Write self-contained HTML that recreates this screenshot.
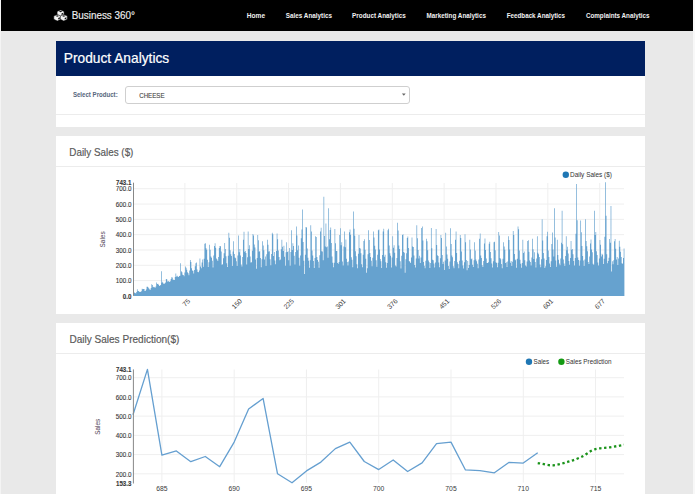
<!DOCTYPE html>
<html><head><meta charset="utf-8"><title>Business 360 - Product Analytics</title>
<style>
html,body{margin:0;padding:0;}
body{width:695px;height:494px;overflow:hidden;background:#e9e9e9;position:relative;font-family:"Liberation Sans", sans-serif;}
.abs{position:absolute;left:0;top:0;}
#edgeL{position:absolute;left:0;top:0;width:1px;height:494px;background:#f4f4f4;}
#edgeR{position:absolute;left:693px;top:0;width:2px;height:494px;background:#f8f8f8;}
#hdr{position:absolute;left:1px;top:0;width:692px;height:31px;background:#000;}
.panel{position:absolute;left:55.5px;width:589.5px;background:#fff;}
#p1{top:41px;height:86px;}
#p2{top:136px;height:178px;}
#p3{top:323px;height:200px;}
#blue{position:absolute;left:0;top:0;width:100%;height:34.5px;background:#001f5f;}
.div{position:absolute;left:0;width:100%;height:1px;background:#ececec;}
svg text{font-family:"Liberation Sans", sans-serif;}
</style></head>
<body>
<div id="edgeL"></div><div id="edgeR"></div>
<div id="hdr"></div>
<div class="panel" id="p1"><div id="blue"></div><div class="div" style="top:73px"></div>
<div style="position:absolute;left:69.5px;top:45.3px;width:284.8px;height:17.8px;border:1px solid #cfcfcf;border-radius:3px;box-sizing:border-box;"></div>
</div>
<div class="panel" id="p2"><div class="div" style="top:29.5px"></div></div>
<div class="panel" id="p3"><div class="div" style="top:29.5px"></div></div>
<svg class="abs" width="695" height="494" viewBox="0 0 695 494">
<g><path d="M60.6,9.9 L64.1,11.5 L64.1,14.8 L60.6,16.5 L57.1,14.8 L57.1,11.5Z" fill="#f4f4f4" stroke="#000" stroke-width="0.5"/><path d="M60.6,10.8 L62.300000000000004,11.55 L60.6,12.3 L58.9,11.55Z M61.5,13.600000000000001 L63.2,12.8 L63.2,14.3 L61.5,15.100000000000001Z" fill="#111"/><path d="M57.3,14.4 L60.8,16.0 L60.8,19.3 L57.3,21.0 L53.8,19.3 L53.8,16.0Z" fill="#f4f4f4" stroke="#000" stroke-width="0.5"/><path d="M57.3,15.3 L59.0,16.05 L57.3,16.8 L55.599999999999994,16.05Z M58.199999999999996,18.1 L59.9,17.3 L59.9,18.8 L58.199999999999996,19.6Z" fill="#111"/><path d="M63.8,14.4 L67.3,16.0 L67.3,19.3 L63.8,21.0 L60.3,19.3 L60.3,16.0Z" fill="#f4f4f4" stroke="#000" stroke-width="0.5"/><path d="M63.8,15.3 L65.5,16.05 L63.8,16.8 L62.099999999999994,16.05Z M64.7,18.1 L66.39999999999999,17.3 L66.39999999999999,18.8 L64.7,19.6Z" fill="#111"/></g>
<text x="71.7" y="18.8" font-size="10.3" fill="#eeeeee" stroke="#eeeeee" stroke-width="0.15" textLength="63.3" lengthAdjust="spacingAndGlyphs">Business 360°</text>
<g font-size="7.5" font-weight="700" fill="#f2f2f2">
<text x="246.8" y="17.7" textLength="18.3" lengthAdjust="spacingAndGlyphs">Home</text>
<text x="285.8" y="17.7" textLength="46.2" lengthAdjust="spacingAndGlyphs">Sales Analytics</text>
<text x="352.1" y="17.7" textLength="53.7" lengthAdjust="spacingAndGlyphs">Product Analytics</text>
<text x="426.5" y="17.7" textLength="59.4" lengthAdjust="spacingAndGlyphs">Marketing Analytics</text>
<text x="506.7" y="17.7" textLength="58.3" lengthAdjust="spacingAndGlyphs">Feedback Analytics</text>
<text x="585.9" y="17.7" textLength="63.6" lengthAdjust="spacingAndGlyphs">Complaints Analytics</text>
</g>
<text x="63.8" y="62.9" font-size="14.2" fill="#ffffff" stroke="#ffffff" stroke-width="0.2" textLength="105.4" lengthAdjust="spacingAndGlyphs">Product Analytics</text>
<text x="72.9" y="97.4" font-size="7.8" font-weight="700" fill="#56667c" textLength="44.8" lengthAdjust="spacingAndGlyphs">Select Product:</text>
<text x="139.2" y="97.8" font-size="8.1" fill="#4a4a4a" stroke="#4a4a4a" stroke-width="0.15" textLength="25.3" lengthAdjust="spacingAndGlyphs">CHEESE</text>
<path d="M401.9 93.4 h3.8 l-1.9 2.3z" fill="#666"/>
<text x="69.3" y="155.5" font-size="11.8" fill="#5a5a5a" stroke="#5a5a5a" stroke-width="0.2" textLength="64.1" lengthAdjust="spacingAndGlyphs">Daily Sales ($)</text>
<text x="69.4" y="342.6" font-size="11.8" fill="#5a5a5a" stroke="#5a5a5a" stroke-width="0.2" textLength="110" lengthAdjust="spacingAndGlyphs">Daily Sales Prediction($)</text>

<!-- chart 1 -->
<g stroke="#efefef" stroke-width="1"><line x1="133.5" x2="624" y1="280.59" y2="280.59"/><line x1="133.5" x2="624" y1="265.28" y2="265.28"/><line x1="133.5" x2="624" y1="249.97" y2="249.97"/><line x1="133.5" x2="624" y1="234.66" y2="234.66"/><line x1="133.5" x2="624" y1="219.35" y2="219.35"/><line x1="133.5" x2="624" y1="204.04" y2="204.04"/><line x1="133.5" x2="624" y1="188.73" y2="188.73"/><line x1="184.90" x2="184.90" y1="183" y2="295.5"/><line x1="236.75" x2="236.75" y1="183" y2="295.5"/><line x1="288.60" x2="288.60" y1="183" y2="295.5"/><line x1="340.45" x2="340.45" y1="183" y2="295.5"/><line x1="392.30" x2="392.30" y1="183" y2="295.5"/><line x1="444.15" x2="444.15" y1="183" y2="295.5"/><line x1="496.00" x2="496.00" y1="183" y2="295.5"/><line x1="547.85" x2="547.85" y1="183" y2="295.5"/><line x1="599.70" x2="599.70" y1="183" y2="295.5"/></g>
<g fill="#66a2cf"><path d="M133.50,295.90L133.50,292.05L134.19,292.05L134.19,292.79L134.88,292.79L134.88,292.90L135.57,292.90L135.57,293.59L136.25,293.59L136.25,292.06L136.94,292.06L136.94,289.13L137.63,289.13L137.63,291.13L138.32,291.13L138.32,291.11L139.01,291.11L139.01,291.68L139.70,291.68L139.70,292.05L140.39,292.05L140.38,291.63L141.07,291.63L141.07,291.22L141.76,291.22L141.76,288.69L142.45,288.69L142.45,289.26L143.14,289.26L143.14,289.10L143.83,289.10L143.83,289.08L144.52,289.08L144.52,290.92L145.20,290.92L145.20,290.84L145.89,290.84L145.89,289.38L146.58,289.38L146.58,286.84L147.27,286.84L147.27,286.72L147.96,286.72L147.96,287.52L148.65,287.52L148.65,288.45L149.34,288.45L149.34,289.56L150.02,289.56L150.02,289.68L150.71,289.68L150.71,288.04L151.40,288.04L151.40,284.35L152.09,284.35L152.09,284.94L152.78,284.94L152.78,287.15L153.47,287.15L153.47,286.86L154.16,286.86L154.16,287.30L154.84,287.30L154.84,287.82L155.53,287.82L155.53,286.38L156.22,286.38L156.22,282.47L156.91,282.47L156.91,284.02L157.60,284.02L157.60,283.86L158.29,283.86L158.29,284.77L158.97,284.77L158.97,285.88L159.66,285.88L159.66,285.61L160.35,285.61L160.35,284.98L161.04,284.98L161.04,271.25L161.73,271.25L161.73,282.86L162.42,282.86L162.42,281.69L163.11,281.69L163.11,283.50L163.79,283.50L163.79,283.98L164.48,283.98L164.48,283.35L165.17,283.35L165.17,282.41L165.86,282.41L165.86,278.88L166.55,278.88L166.55,279.30L167.24,279.30L167.24,281.40L167.93,281.40L167.93,281.22L168.61,281.22L168.61,281.30L169.30,281.30L169.30,282.00L169.99,282.00L169.99,281.34L170.68,281.34L170.68,278.96L171.37,278.96L171.37,277.13L172.06,277.13L172.06,277.53L172.74,277.53L172.74,279.71L173.43,279.71L173.43,279.74L174.12,279.74L174.12,280.10L174.81,280.10L174.81,276.90L175.50,276.90L175.50,273.38L176.19,273.38L176.19,276.39L176.88,276.39L176.88,275.75L177.56,275.75L177.56,276.68L178.25,276.68L178.25,276.94L178.94,276.94L178.94,275.94L179.63,275.94L179.63,275.67L180.32,275.67L180.32,263.14L181.01,263.14L181.01,271.15L181.70,271.15L181.69,272.16L182.38,272.16L182.38,274.83L183.07,274.83L183.07,274.98L183.76,274.98L183.76,276.24L184.45,276.24L184.45,272.62L185.14,272.62L185.14,266.42L185.83,266.42L185.83,267.72L186.51,267.72L186.51,269.85L187.20,269.85L187.20,272.25L187.89,272.25L187.89,273.21L188.58,273.21L188.58,275.31L189.27,275.31L189.27,270.41L189.96,270.41L189.96,259.92L190.65,259.92L190.65,262.05L191.33,262.05L191.33,268.28L192.02,268.28L192.02,270.55L192.71,270.55L192.71,270.86L193.40,270.86L193.40,273.49L194.09,273.49L194.09,269.92L194.78,269.92L194.78,266.25L195.47,266.25L195.47,263.13L196.15,263.13L196.15,262.53L196.84,262.53L196.84,269.58L197.53,269.58L197.53,271.91L198.22,271.91L198.22,272.28L198.91,272.28L198.91,270.42L199.60,270.42L199.60,258.39L200.28,258.39L200.28,266.38L200.97,266.38L200.97,268.37L201.66,268.37L201.66,262.56L202.35,262.56L202.35,259.61L203.04,259.61L203.04,266.64L203.73,266.64L203.73,258.72L204.42,258.72L204.42,243.79L205.10,243.79L205.10,243.35L205.79,243.35L205.79,248.31L206.48,248.31L206.48,249.68L207.17,249.68L207.17,259.73L207.86,259.73L207.86,266.90L208.55,266.90L208.55,262.31L209.23,262.31L209.24,244.76L209.92,244.76L209.92,249.84L210.61,249.84L210.61,256.49L211.30,256.49L211.30,257.76L211.99,257.76L211.99,260.68L212.68,260.68L212.68,267.46L213.37,267.46L213.37,255.41L214.05,255.41L214.05,245.99L214.74,245.99L214.74,243.24L215.43,243.24L215.43,247.85L216.12,247.85L216.12,258.46L216.81,258.46L216.81,259.45L217.50,259.45L217.50,261.07L218.19,261.07L218.19,257.01L218.87,257.01L218.87,247.96L219.56,247.96L219.56,245.90L220.25,245.90L220.25,246.16L220.94,246.16L220.94,251.50L221.63,251.50L221.63,264.77L222.32,264.77L222.32,264.20L223.01,264.20L223.00,258.30L223.69,258.30L223.69,253.28L224.38,253.28L224.38,243.05L225.07,243.05L225.07,248.88L225.76,248.88L225.76,256.28L226.45,256.28L226.45,263.37L227.14,263.37L227.14,267.07L227.82,267.07L227.82,255.85L228.51,255.85L228.51,232.67L229.20,232.67L229.20,237.68L229.89,237.68L229.89,250.17L230.58,250.17L230.58,254.30L231.27,254.30L231.27,256.10L231.96,256.10L231.96,265.98L232.64,265.98L232.64,251.57L233.33,251.57L233.33,241.15L234.02,241.15L234.02,254.06L234.71,254.06L234.71,257.41L235.40,257.41L235.40,258.20L236.09,258.20L236.09,261.19L236.78,261.19L236.78,265.96L237.46,265.96L237.46,255.57L238.15,255.57L238.15,235.55L238.84,235.55L238.84,252.22L239.53,252.22L239.53,249.03L240.22,249.03L240.22,255.59L240.91,255.59L240.91,264.42L241.59,264.42L241.59,266.40L242.28,266.40L242.28,256.91L242.97,256.91L242.97,239.87L243.66,239.87L243.66,231.67L244.35,231.67L244.35,251.69L245.04,251.69L245.04,251.10L245.73,251.10L245.73,252.98L246.41,252.98L246.41,264.50L247.10,264.50L247.10,257.24L247.79,257.24L247.79,231.44L248.48,231.44L248.48,249.04L249.17,249.04L249.17,245.31L249.86,245.31L249.86,256.57L250.54,256.57L250.55,262.42L251.23,262.42L251.23,262.22L251.92,262.22L251.92,250.79L252.61,250.79L252.61,233.89L253.30,233.89L253.30,235.54L253.99,235.54L253.99,244.55L254.68,244.55L254.68,247.43L255.36,247.43L255.36,259.44L256.05,259.44L256.05,268.73L256.74,268.73L256.74,257.88L257.43,257.88L257.43,234.99L258.12,234.99L258.12,240.23L258.81,240.23L258.81,251.86L259.50,251.86L259.50,250.99L260.18,250.99L260.18,257.88L260.87,257.88L260.87,267.37L261.56,267.37L261.56,259.30L262.25,259.30L262.25,241.24L262.94,241.24L262.94,245.53L263.63,245.53L263.63,250.16L264.31,250.16L264.31,259.42L265.00,259.42L265.00,256.47L265.69,256.47L265.69,266.08L266.38,266.08L266.38,254.27L267.07,254.27L267.07,239.87L267.76,239.87L267.76,244.80L268.45,244.80L268.45,251.58L269.13,251.58L269.13,251.23L269.82,251.23L269.82,259.33L270.51,259.33L270.51,265.16L271.20,265.16L271.20,253.96L271.89,253.96L271.89,232.67L272.58,232.67L272.58,234.19L273.27,234.19L273.27,256.04L273.95,256.04L273.95,251.90L274.64,251.90L274.64,260.59L275.33,260.59L275.33,264.17L276.02,264.17L276.02,251.07L276.71,251.07L276.71,233.44L277.40,233.44L277.40,239.19L278.08,239.19L278.09,250.41L278.77,250.41L278.77,256.99L279.46,256.99L279.46,260.26L280.15,260.26L280.15,259.44L280.84,259.44L280.84,249.27L281.53,249.27L281.53,239.87L282.22,239.87L282.22,246.65L282.90,246.65L282.90,251.02L283.59,251.02L283.59,245.81L284.28,245.81L284.28,256.68L284.97,256.68L284.97,265.86L285.66,265.86L285.66,252.27L286.35,252.27L286.35,242.31L287.04,242.31L287.04,251.91L287.72,251.91L287.72,251.33L288.41,251.33L288.41,260.21L289.10,260.21L289.10,248.06L289.79,248.06L289.79,265.71L290.48,265.71L290.48,252.05L291.17,252.05L291.17,230.22L291.86,230.22L291.86,250.12L292.54,250.12L292.54,243.29L293.23,243.29L293.23,246.12L293.92,246.12L293.92,255.76L294.61,255.76L294.61,264.52L295.30,264.52L295.30,252.04L295.99,252.04L295.99,226.55L296.67,226.55L296.67,235.62L297.36,235.62L297.36,250.34L298.05,250.34L298.05,245.60L298.74,245.60L298.74,257.85L299.43,257.85L299.43,265.68L300.12,265.68L300.12,255.42L300.81,255.42L300.81,238.17L301.49,238.17L301.49,229.61L302.18,229.61L302.18,209.55L302.87,209.55L302.87,241.99L303.56,241.99L303.56,260.85L304.25,260.85L304.25,274.01L304.94,274.01L304.94,254.81L305.62,254.81L305.62,227.07L306.31,227.07L306.31,227.60L307.00,227.60L307.00,248.49L307.69,248.49L307.69,257.73L308.38,257.73L308.38,260.84L309.07,260.84L309.07,267.69L309.76,267.69L309.76,260.34L310.44,260.34L310.44,225.32L311.13,225.32L311.13,231.50L311.82,231.50L311.82,250.42L312.51,250.42L312.51,255.42L313.20,255.42L313.20,261.02L313.89,261.02L313.89,267.99L314.58,267.99L314.58,258.06L315.26,258.06L315.26,236.19L315.95,236.19L315.95,237.00L316.64,237.00L316.64,257.03L317.33,257.03L317.33,259.89L318.02,259.89L318.02,261.76L318.71,261.76L318.71,267.83L319.39,267.83L319.39,255.15L320.08,255.15L320.08,231.44L320.77,231.44L320.77,227.67L321.46,227.67L321.46,251.31L322.15,251.31L322.15,251.39L322.84,251.39L322.84,260.21L323.53,260.21L323.53,196.84L324.21,196.84L324.21,235.88L324.90,235.88L324.90,246.56L325.59,246.56L325.59,223.54L326.28,223.54L326.28,247.21L326.97,247.21L326.97,246.38L327.66,246.38L327.66,257.72L328.35,257.72L328.35,208.33L329.03,208.33L329.03,239.27L329.72,239.27L329.72,230.12L330.41,230.12L330.41,227.48L331.10,227.48L331.10,243.09L331.79,243.09L331.79,256.45L332.48,256.45L332.48,262.69L333.16,262.69L333.16,267.24L333.85,267.24L333.85,262.86L334.54,262.86L334.54,229.00L335.23,229.00L335.23,243.21L335.92,243.21L335.92,251.04L336.61,251.04L336.61,250.89L337.30,250.89L337.30,262.94L337.98,262.94L337.98,263.80L338.67,263.80L338.67,262.08L339.36,262.08L339.36,235.12L340.05,235.12L340.05,228.28L340.74,228.28L340.74,245.34L341.43,245.34L341.43,242.33L342.12,242.33L342.12,261.53L342.80,261.53L342.80,265.49L343.49,265.49L343.49,246.45L344.18,246.45L344.18,231.44L344.87,231.44L344.87,247.35L345.56,247.35L345.56,239.57L346.25,239.57L346.25,258.68L346.93,258.68L346.94,262.08L347.62,262.08L347.62,265.60L348.31,265.60L348.31,261.58L349.00,261.58L349.00,232.28L349.69,232.28L349.69,229.61L350.38,229.61L350.38,234.80L351.07,234.80L351.07,257.24L351.75,257.24L351.75,259.70L352.44,259.70L352.44,267.31L353.13,267.31L353.13,211.39L353.82,211.39L353.82,228.70L354.51,228.70L354.51,235.86L355.20,235.86L355.20,251.33L355.89,251.33L355.89,256.26L356.57,256.26L356.57,264.37L357.26,264.37L357.26,268.34L357.95,268.34L357.95,253.65L358.64,253.65L358.64,235.12L359.33,235.12L359.33,247.91L360.02,247.91L360.02,248.41L360.70,248.41L360.71,253.19L361.39,253.19L361.39,264.30L362.08,264.30L362.08,267.17L362.77,267.17L362.77,254.74L363.46,254.74L363.46,241.09L364.15,241.09L364.15,239.26L364.84,239.26L364.84,249.82L365.52,249.82L365.52,258.76L366.21,258.76L366.21,272.78L366.90,272.78L366.90,268.16L367.59,268.16L367.59,254.28L368.28,254.28L368.28,230.22L368.97,230.22L368.97,240.04L369.66,240.04L369.66,253.01L370.34,253.01L370.34,257.11L371.03,257.11L371.03,260.85L371.72,260.85L371.72,266.33L372.41,266.33L372.41,257.64L373.10,257.64L373.10,231.44L373.79,231.44L373.79,237.51L374.47,237.51L374.48,245.72L375.16,245.72L375.16,249.54L375.85,249.54L375.85,260.21L376.54,260.21L376.54,266.72L377.23,266.72L377.23,254.83L377.92,254.83L377.92,230.22L378.61,230.22L378.61,229.61L379.29,229.61L379.29,249.56L379.98,249.56L379.98,258.97L380.67,258.97L380.67,261.15L381.36,261.15L381.36,268.01L382.05,268.01L382.05,254.96L382.74,254.96L382.74,231.44L383.43,231.44L383.43,228.64L384.11,228.64L384.11,256.65L384.80,256.65L384.80,254.69L385.49,254.69L385.49,262.13L386.18,262.13L386.18,267.79L386.87,267.79L386.87,262.94L387.56,262.94L387.56,230.22L388.25,230.22L388.25,228.68L388.93,228.68L388.93,245.60L389.62,245.60L389.62,253.31L390.31,253.31L390.31,255.87L391.00,255.87L391.00,267.60L391.69,267.60L391.69,257.61L392.38,257.61L392.38,236.19L393.06,236.19L393.06,247.87L393.75,247.87L393.75,245.17L394.44,245.17L394.44,252.78L395.13,252.78L395.13,265.52L395.82,265.52L395.82,266.49L396.51,266.49L396.51,258.00L397.20,258.00L397.20,222.87L397.88,222.87L397.88,230.52L398.57,230.52L398.57,245.59L399.26,245.59L399.26,249.02L399.95,249.02L399.95,261.21L400.64,261.21L400.64,268.44L401.33,268.44L401.33,255.68L402.01,255.68L402.01,235.12L402.70,235.12L402.70,234.33L403.39,234.33L403.39,252.02L404.08,252.02L404.08,252.78L404.77,252.78L404.77,272.78L405.46,272.78L405.46,259.13L406.15,259.13L406.15,253.34L406.83,253.34L406.83,238.03L407.52,238.03L407.52,236.48L408.21,236.48L408.21,248.00L408.90,248.00L408.90,260.94L409.59,260.94L409.59,261.78L410.28,261.78L410.28,262.90L410.97,262.90L410.97,257.46L411.65,257.46L411.65,237.42L412.34,237.42L412.34,246.56L413.03,246.56L413.03,247.02L413.72,247.02L413.72,255.57L414.41,255.57L414.41,264.89L415.10,264.89L415.10,267.42L415.78,267.42L415.79,258.50L416.47,258.50L416.47,225.32L417.16,225.32L417.16,238.35L417.85,238.35L417.85,249.88L418.54,249.88L418.54,258.41L419.23,258.41L419.23,255.64L419.92,255.64L419.92,263.01L420.60,263.01L420.60,257.49L421.29,257.49L421.29,227.90L421.98,227.90L421.98,226.53L422.67,226.53L422.67,240.55L423.36,240.55L423.36,261.91L424.05,261.91L424.05,265.86L424.74,265.86L424.74,268.21L425.42,268.21L425.42,260.86L426.11,260.86L426.11,238.64L426.80,238.64L426.80,241.35L427.49,241.35L427.49,250.18L428.18,250.18L428.18,260.53L428.87,260.53L428.87,262.13L429.55,262.13L429.56,267.96L430.24,267.96L430.24,262.98L430.93,262.98L430.93,228.07L431.62,228.07L431.62,248.31L432.31,248.31L432.31,259.63L433.00,259.63L433.00,260.22L433.69,260.22L433.69,263.58L434.37,263.58L434.37,267.52L435.06,267.52L435.06,262.47L435.75,262.47L435.75,229.00L436.44,229.00L436.44,245.01L437.13,245.01L437.13,255.34L437.82,255.34L437.82,256.08L438.51,256.08L438.51,262.46L439.19,262.46L439.19,267.17L439.88,267.17L439.88,258.14L440.57,258.14L440.57,235.12L441.26,235.12L441.26,238.11L441.95,238.11L441.95,255.04L442.64,255.04L442.64,264.08L443.32,264.08L443.32,261.85L444.01,261.85L444.01,269.88L444.70,269.88L444.70,260.39L445.39,260.39L445.39,232.67L446.08,232.67L446.08,246.41L446.77,246.41L446.77,254.46L447.46,254.46L447.46,258.78L448.14,258.78L448.14,266.07L448.83,266.07L448.83,269.11L449.52,269.11L449.52,261.47L450.21,261.47L450.21,228.28L450.90,228.28L450.90,243.92L451.59,243.92L451.59,255.61L452.28,255.61L452.28,257.37L452.96,257.37L452.96,266.24L453.65,266.24L453.65,268.30L454.34,268.30L454.34,261.01L455.03,261.01L455.03,239.87L455.72,239.87L455.72,231.48L456.41,231.48L456.41,253.06L457.09,253.06L457.10,262.27L457.78,262.27L457.78,264.01L458.47,264.01L458.47,268.19L459.16,268.19L459.16,260.68L459.85,260.68L459.85,235.12L460.54,235.12L460.54,238.01L461.23,238.01L461.23,251.39L461.91,251.39L461.91,260.53L462.60,260.53L462.60,265.49L463.29,265.49L463.29,268.58L463.98,268.58L463.98,262.23L464.67,262.23L464.67,234.15L465.36,234.15L465.36,242.35L466.05,242.35L466.05,260.10L466.73,260.10L466.73,270.33L467.42,270.33L467.42,260.96L468.11,260.96L468.11,268.02L468.80,268.02L468.80,264.95L469.49,264.95L469.49,239.87L470.18,239.87L470.18,249.58L470.86,249.58L470.87,259.34L471.55,259.34L471.55,258.43L472.24,258.43L472.24,264.74L472.93,264.74L472.93,266.94L473.62,266.94L473.62,260.24L474.31,260.24L474.31,242.31L475.00,242.31L475.00,250.43L475.68,250.43L475.68,259.44L476.37,259.44L476.37,261.14L477.06,261.14L477.06,263.73L477.75,263.73L477.75,268.22L478.44,268.22L478.44,259.60L479.13,259.60L479.13,238.64L479.82,238.64L479.82,233.52L480.50,233.52L480.50,255.43L481.19,255.43L481.19,257.97L481.88,257.97L481.88,265.31L482.57,265.31L482.57,266.97L483.26,266.97L483.26,261.09L483.95,261.09L483.95,243.54L484.63,243.54L484.63,238.38L485.32,238.38L485.32,249.99L486.01,249.99L486.01,258.51L486.70,258.51L486.70,262.91L487.39,262.91L487.39,262.94L488.08,262.94L488.08,262.29L488.77,262.29L488.77,243.65L489.45,243.65L489.45,241.80L490.14,241.80L490.14,252.10L490.83,252.10L490.83,258.15L491.52,258.15L491.52,263.54L492.21,263.54L492.21,267.48L492.90,267.48L492.90,261.35L493.59,261.35L493.59,242.31L494.27,242.31L494.27,241.84L494.96,241.84L494.96,250.28L495.65,250.28L495.65,262.31L496.34,262.31L496.34,263.12L497.03,263.12L497.03,267.24L497.72,267.24L497.72,262.86L498.40,262.86L498.40,231.90L499.09,231.90L499.09,235.50L499.78,235.50L499.78,257.96L500.47,257.96L500.47,259.21L501.16,259.21L501.16,264.05L501.85,264.05L501.85,268.24L502.54,268.24L502.54,258.69L503.22,258.69L503.22,242.31L503.91,242.31L503.91,246.40L504.60,246.40L504.60,249.74L505.29,249.74L505.29,262.91L505.98,262.91L505.98,262.37L506.67,262.37L506.67,267.08L507.36,267.08L507.36,261.41L508.04,261.41L508.04,236.19L508.73,236.19L508.73,239.88L509.42,239.88L509.42,249.43L510.11,249.43L510.11,262.63L510.80,262.63L510.80,260.89L511.49,260.89L511.49,265.88L512.17,265.88L512.17,261.80L512.86,261.80L512.86,230.99L513.55,230.99L513.55,234.90L514.24,234.90L514.24,253.91L514.93,253.91L514.93,260.20L515.62,260.20L515.62,259.37L516.31,259.37L516.31,267.78L516.99,267.78L516.99,258.69L517.68,258.69L517.68,226.55L518.37,226.55L518.37,229.29L519.06,229.29L519.06,250.40L519.75,250.40L519.75,259.86L520.44,259.86L520.44,263.73L521.13,263.73L521.13,267.63L521.81,267.63L521.81,263.02L522.50,263.02L522.50,239.87L523.19,239.87L523.19,253.04L523.88,253.04L523.88,251.44L524.57,251.44L524.57,260.19L525.26,260.19L525.26,265.44L525.94,265.44L525.94,266.49L526.63,266.49L526.63,261.44L527.32,261.44L527.32,241.09L528.01,241.09L528.01,240.21L528.70,240.21L528.70,251.75L529.39,251.75L529.39,260.45L530.08,260.45L530.08,261.97L530.76,261.97L530.76,265.43L531.45,265.43L531.45,257.52L532.14,257.52L532.14,238.64L532.83,238.64L532.83,249.20L533.52,249.20L533.52,259.04L534.21,259.04L534.21,252.37L534.90,252.37L534.90,261.94L535.58,261.94L535.58,267.57L536.27,267.57L536.27,258.40L536.96,258.40L536.96,236.16L537.65,236.16L537.65,252.63L538.34,252.63L538.34,254.15L539.03,254.15L539.03,257.04L539.71,257.04L539.71,264.57L540.40,264.57L540.40,267.26L541.09,267.26L541.09,259.27L541.78,259.27L541.78,219.35L542.47,219.35L542.47,240.44L543.16,240.44L543.16,252.90L543.85,252.90L543.85,258.56L544.53,258.56L544.53,267.88L545.22,267.88L545.22,266.19L545.91,266.19L545.91,259.97L546.60,259.97L546.60,236.19L547.29,236.19L547.29,231.77L547.98,231.77L547.98,250.45L548.67,250.45L548.67,256.98L549.35,256.98L549.35,263.44L550.04,263.44L550.04,267.12L550.73,267.12L550.73,261.35L551.42,261.35L551.42,244.07L552.11,244.07L552.11,232.62L552.80,232.62L552.80,249.53L553.48,249.53L553.49,256.54L554.17,256.54L554.17,208.33L554.86,208.33L554.86,237.41L555.55,237.41L555.55,260.56L556.24,260.56L556.24,266.66L556.93,266.66L556.93,239.83L557.62,239.83L557.62,255.02L558.30,255.02L558.30,259.66L558.99,259.66L558.99,263.56L559.68,263.56L559.68,265.17L560.37,265.17L560.37,258.59L561.06,258.59L561.06,242.84L561.75,242.84L561.75,210.78L562.44,210.78L562.44,244.13L563.12,244.13L563.12,259.54L563.81,259.54L563.81,263.57L564.50,263.57L564.50,266.08L565.19,266.08L565.19,256.06L565.88,256.06L565.88,236.19L566.57,236.19L566.57,250.14L567.25,250.14L567.25,246.66L567.94,246.66L567.94,253.46L568.63,253.46L568.63,261.01L569.32,261.01L569.32,264.73L570.01,264.73L570.01,257.92L570.70,257.92L570.70,241.09L571.39,241.09L571.39,249.66L572.07,249.66L572.07,248.96L572.76,248.96L572.76,254.18L573.45,254.18L573.45,261.09L574.14,261.09L574.14,265.46L574.83,265.46L574.83,258.06L575.52,258.06L575.52,233.63L576.21,233.63L576.21,183.98L576.89,183.98L576.89,220.16L577.58,220.16L577.58,257.50L578.27,257.50L578.27,259.96L578.96,259.96L578.96,265.69L579.65,265.69L579.65,260.43L580.34,260.43L580.34,220.42L581.02,220.42L581.02,232.18L581.71,232.18L581.71,246.02L582.40,246.02L582.40,256.02L583.09,256.02L583.09,260.60L583.78,260.60L583.78,265.93L584.47,265.93L584.47,259.39L585.16,259.39L585.16,219.20L585.84,219.20L585.84,240.91L586.53,240.91L586.53,246.19L587.22,246.19L587.22,251.24L587.91,251.24L587.91,261.90L588.60,261.90L588.60,264.02L589.29,264.02L589.29,256.41L589.98,256.41L589.98,243.41L590.66,243.41L590.66,239.40L591.35,239.40L591.35,249.55L592.04,249.55L592.04,252.30L592.73,252.30L592.73,263.65L593.42,263.65L593.42,264.79L594.11,264.79L594.11,210.78L594.79,210.78L594.80,235.10L595.48,235.10L595.48,232.10L596.17,232.10L596.17,251.31L596.86,251.31L596.86,255.07L597.55,255.07L597.55,262.59L598.24,262.59L598.24,265.49L598.93,265.49L598.93,258.54L599.61,258.54L599.61,240.02L600.30,240.02L600.30,244.84L600.99,244.84L600.99,256.62L601.68,256.62L601.68,253.78L602.37,253.78L602.37,254.82L603.06,254.82L603.06,264.08L603.75,264.08L603.75,258.78L604.43,258.78L604.43,236.78L605.12,236.78L605.12,182.13L605.81,182.13L605.81,215.65L606.50,215.65L606.50,254.31L607.19,254.31L607.19,263.17L607.88,263.17L607.88,261.06L608.57,261.06L608.57,257.70L609.25,257.70L609.25,238.97L609.94,238.97L609.94,242.64L610.63,242.64L610.63,205.88L611.32,205.88L611.32,271.40L612.01,271.40L612.01,261.17L612.70,261.17L612.70,264.22L613.38,264.22L613.38,260.22L614.07,260.22L614.07,241.24L614.76,241.24L614.76,238.88L615.45,238.88L615.45,248.64L616.14,248.64L616.14,259.51L616.83,259.51L616.83,256.99L617.52,256.99L617.52,264.91L618.20,264.91L618.20,258.59L618.89,258.59L618.89,240.78L619.58,240.78L619.58,246.85L620.27,246.85L620.27,251.87L620.96,251.87L620.96,257.01L621.65,257.01L621.65,263.21L622.34,263.21L622.34,263.82L623.02,263.82L623.02,257.95L623.71,257.95L623.71,248.59L624.40,248.59L624.40,295.90Z"/></g>
<line x1="133.5" x2="133.5" y1="182.7" y2="295.8" stroke="#888" stroke-width="1"/>
<g font-size="6.9" fill="#383838" stroke="#383838" stroke-width="0.12"><text x="131.4" y="283.34" text-anchor="end" textLength="15.6" lengthAdjust="spacingAndGlyphs">100.0</text><text x="131.4" y="268.03" text-anchor="end" textLength="15.6" lengthAdjust="spacingAndGlyphs">200.0</text><text x="131.4" y="252.72" text-anchor="end" textLength="15.6" lengthAdjust="spacingAndGlyphs">300.0</text><text x="131.4" y="237.41" text-anchor="end" textLength="15.6" lengthAdjust="spacingAndGlyphs">400.0</text><text x="131.4" y="222.10" text-anchor="end" textLength="15.6" lengthAdjust="spacingAndGlyphs">500.0</text><text x="131.4" y="206.79" text-anchor="end" textLength="15.6" lengthAdjust="spacingAndGlyphs">600.0</text><text x="131.4" y="191.48" text-anchor="end" textLength="15.6" lengthAdjust="spacingAndGlyphs">700.0</text><text x="131.4" y="298.65" text-anchor="end" font-weight="700" textLength="8.6" lengthAdjust="spacingAndGlyphs">0.0</text><text x="131.4" y="184.88" text-anchor="end" font-weight="700" textLength="15.4" lengthAdjust="spacingAndGlyphs">743.1</text></g>
<g font-size="6.8" fill="#3a3a3a"><text transform="translate(190.70,301.6) rotate(-45)" text-anchor="end">75</text><text transform="translate(242.55,301.6) rotate(-45)" text-anchor="end">150</text><text transform="translate(294.40,301.6) rotate(-45)" text-anchor="end">225</text><text transform="translate(346.25,301.6) rotate(-45)" text-anchor="end">301</text><text transform="translate(398.10,301.6) rotate(-45)" text-anchor="end">376</text><text transform="translate(449.95,301.6) rotate(-45)" text-anchor="end">451</text><text transform="translate(501.80,301.6) rotate(-45)" text-anchor="end">526</text><text transform="translate(553.65,301.6) rotate(-45)" text-anchor="end">601</text><text transform="translate(605.50,301.6) rotate(-45)" text-anchor="end">677</text></g>
<text transform="translate(104.6,239.4) rotate(-90)" text-anchor="middle" font-size="6.4" fill="#4b3b50">Sales</text>
<circle cx="565.8" cy="174.8" r="3.2" fill="#1f77b4"/>
<text x="570" y="177" font-size="6.4" fill="#333" textLength="42" lengthAdjust="spacingAndGlyphs">Daily Sales ($)</text>

<!-- chart 2 -->
<g stroke="#efefef" stroke-width="1"><line x1="133.5" x2="624" y1="473.80" y2="473.80"/><line x1="133.5" x2="624" y1="454.58" y2="454.58"/><line x1="133.5" x2="624" y1="435.36" y2="435.36"/><line x1="133.5" x2="624" y1="416.14" y2="416.14"/><line x1="133.5" x2="624" y1="396.92" y2="396.92"/><line x1="133.5" x2="624" y1="377.70" y2="377.70"/><line x1="161.90" x2="161.90" y1="369.5" y2="482.7"/><line x1="234.18" x2="234.18" y1="369.5" y2="482.7"/><line x1="306.45" x2="306.45" y1="369.5" y2="482.7"/><line x1="378.73" x2="378.73" y1="369.5" y2="482.7"/><line x1="451.00" x2="451.00" y1="369.5" y2="482.7"/><line x1="523.27" x2="523.27" y1="369.5" y2="482.7"/><line x1="595.55" x2="595.55" y1="369.5" y2="482.7"/></g>
<polyline points="132.99,414.79 147.44,369.42 161.90,455.16 176.36,450.93 190.81,461.69 205.27,456.50 219.72,466.69 234.18,442.09 248.63,409.03 263.09,398.46 277.54,473.80 292.00,482.78 306.45,470.92 320.90,462.08 335.36,448.62 349.81,442.09 364.27,461.50 378.73,469.57 393.18,459.96 407.63,471.49 422.09,462.84 436.54,443.62 451.00,442.09 465.46,469.96 479.91,470.53 494.37,472.84 508.82,462.46 523.27,463.04 537.73,452.66" fill="none" stroke="#659fd0" stroke-width="1.3" stroke-linejoin="round"/>
<defs><clipPath id="c2"><rect x="133" y="360" width="491" height="130"/></clipPath></defs><path d="M537.73,463.04C542.55,463.81 547.37,465.34 552.19,465.34C557.00,465.34 561.82,463.56 566.64,462.27C571.46,460.98 576.28,459.18 581.10,457.08C585.91,454.97 590.73,449.96 595.55,449.01C600.37,448.06 605.19,447.96 610.00,447.28C614.82,446.59 619.64,445.61 624.46,444.78" clip-path="url(#c2)" fill="none" stroke="#1a931a" stroke-width="2.3" stroke-dasharray="2.4,2.6"/>
<line x1="133.4" x2="133.4" y1="369.4" y2="483.5" stroke="#888" stroke-width="1"/>
<g font-size="6.9" fill="#383838" stroke="#383838" stroke-width="0.12"><text x="131.4" y="476.55" text-anchor="end" textLength="15.6" lengthAdjust="spacingAndGlyphs">200.0</text><text x="131.4" y="457.33" text-anchor="end" textLength="15.6" lengthAdjust="spacingAndGlyphs">300.0</text><text x="131.4" y="438.11" text-anchor="end" textLength="15.6" lengthAdjust="spacingAndGlyphs">400.0</text><text x="131.4" y="418.89" text-anchor="end" textLength="15.6" lengthAdjust="spacingAndGlyphs">500.0</text><text x="131.4" y="399.67" text-anchor="end" textLength="15.6" lengthAdjust="spacingAndGlyphs">600.0</text><text x="131.4" y="380.45" text-anchor="end" textLength="15.6" lengthAdjust="spacingAndGlyphs">700.0</text><text x="131.4" y="486.08" text-anchor="end" font-weight="700" textLength="15.4" lengthAdjust="spacingAndGlyphs">153.3</text><text x="131.4" y="372.17" text-anchor="end" font-weight="700" textLength="15.4" lengthAdjust="spacingAndGlyphs">743.1</text></g>
<g font-size="6.8" fill="#3a3a3a"><text x="161.90" y="491" text-anchor="middle">685</text><text x="234.18" y="491" text-anchor="middle">690</text><text x="306.45" y="491" text-anchor="middle">695</text><text x="378.73" y="491" text-anchor="middle">700</text><text x="451.00" y="491" text-anchor="middle">705</text><text x="523.27" y="491" text-anchor="middle">710</text><text x="595.55" y="491" text-anchor="middle">715</text></g>
<text transform="translate(99.9,426.7) rotate(-90)" text-anchor="middle" font-size="6.4" fill="#4b3b50">Sales</text>
<circle cx="529" cy="361.7" r="3.2" fill="#1f77b4"/>
<text x="533.5" y="363.9" font-size="6.4" fill="#333" textLength="15.7" lengthAdjust="spacingAndGlyphs">Sales</text>
<circle cx="561.4" cy="361.7" r="3.2" fill="#139a13"/>
<text x="565.8" y="363.9" font-size="6.4" fill="#333" textLength="45.7" lengthAdjust="spacingAndGlyphs">Sales Prediction</text>
</svg>
</body></html>
